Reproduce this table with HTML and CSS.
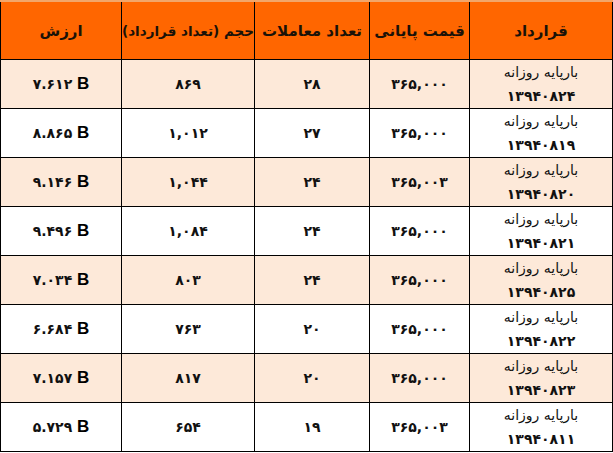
FILE: index.html
```html
<!DOCTYPE html>
<html lang="fa" dir="rtl">
<head>
<meta charset="utf-8">
<link rel="stylesheet" href="styles.css">
</head>
<body>
<table class="grid">
  <colgroup>
    <col class="c1"><col class="c2"><col class="c3"><col class="c4"><col class="c5">
  </colgroup>
  <thead>
    <tr class="head">
      <th>قرارداد</th>
      <th>قیمت پایانی</th>
      <th>تعداد معاملات</th>
      <th class="tight">حجم (تعداد قرارداد)</th>
      <th>ارزش</th>
    </tr>
  </thead>
  <tbody>
    <tr class="alt">
      <td class="name">بارپایه روزانه<br><span class="date">۱۳۹۴۰۸۲۴</span></td>
      <td class="num">۳۶۵,۰۰۰</td><td class="num">۲۸</td><td class="num">۸۶۹</td>
      <td class="num"><span class="val" dir="ltr">۷.۶۱۲ <b>B</b></span></td>
    </tr>
    <tr>
      <td class="name">بارپایه روزانه<br><span class="date">۱۳۹۴۰۸۱۹</span></td>
      <td class="num">۳۶۵,۰۰۰</td><td class="num">۲۷</td><td class="num">۱,۰۱۲</td>
      <td class="num"><span class="val" dir="ltr">۸.۸۶۵ <b>B</b></span></td>
    </tr>
    <tr class="alt">
      <td class="name">بارپایه روزانه<br><span class="date">۱۳۹۴۰۸۲۰</span></td>
      <td class="num">۳۶۵,۰۰۳</td><td class="num">۲۴</td><td class="num">۱,۰۴۴</td>
      <td class="num"><span class="val" dir="ltr">۹.۱۴۶ <b>B</b></span></td>
    </tr>
    <tr>
      <td class="name">بارپایه روزانه<br><span class="date">۱۳۹۴۰۸۲۱</span></td>
      <td class="num">۳۶۵,۰۰۰</td><td class="num">۲۴</td><td class="num">۱,۰۸۴</td>
      <td class="num"><span class="val" dir="ltr">۹.۴۹۶ <b>B</b></span></td>
    </tr>
    <tr class="alt">
      <td class="name">بارپایه روزانه<br><span class="date">۱۳۹۴۰۸۲۵</span></td>
      <td class="num">۳۶۵,۰۰۰</td><td class="num">۲۴</td><td class="num">۸۰۳</td>
      <td class="num"><span class="val" dir="ltr">۷.۰۳۴ <b>B</b></span></td>
    </tr>
    <tr>
      <td class="name">بارپایه روزانه<br><span class="date">۱۳۹۴۰۸۲۲</span></td>
      <td class="num">۳۶۵,۰۰۰</td><td class="num">۲۰</td><td class="num">۷۶۳</td>
      <td class="num"><span class="val" dir="ltr">۶.۶۸۴ <b>B</b></span></td>
    </tr>
    <tr class="alt">
      <td class="name">بارپایه روزانه<br><span class="date">۱۳۹۴۰۸۲۳</span></td>
      <td class="num">۳۶۵,۰۰۰</td><td class="num">۲۰</td><td class="num">۸۱۷</td>
      <td class="num"><span class="val" dir="ltr">۷.۱۵۷ <b>B</b></span></td>
    </tr>
    <tr>
      <td class="name">بارپایه روزانه<br><span class="date">۱۳۹۴۰۸۱۱</span></td>
      <td class="num">۳۶۵,۰۰۳</td><td class="num">۱۹</td><td class="num">۶۵۴</td>
      <td class="num"><span class="val" dir="ltr">۵.۷۲۹ <b>B</b></span></td>
    </tr>
  </tbody>
</table>
</body>
</html>
```
FILE: styles.css
```css
html, body {
  margin: 0;
  padding: 0;
  background: #ffffff;
}
body {
  font-family: "DejaVu Sans", "Noto Sans", sans-serif;
  color: #111111;
}
.grid {
  border-collapse: collapse;
  table-layout: fixed;
  width: 612px;
  margin-left: 1px;
  border-top: 2px solid #f2a66a;
}
.c1 { width: 143px; }
.c2 { width: 100px; }
.c3 { width: 115px; }
.c4 { width: 133px; }
.c5 { width: 121px; }
.grid th,
.grid td {
  border: 1px solid #000000;
  padding: 0;
  text-align: center;
  vertical-align: middle;
}
.head th {
  background: #ff6600;
  height: 57px;
  font-size: 15px;
  font-weight: bold;
  color: #1a1208;
  border-top: none;
  white-space: nowrap;
}
.head th.tight {
  font-size: 13.5px;
  letter-spacing: -0.3px;
}
.grid tbody tr {
  height: 49px;
}
.grid tbody td {
  height: 48px;
}
.alt td {
  background: #fde9d9;
}
.num {
  font-size: 14px;
  font-weight: bold;
}
.name {
  font-size: 14px;
  line-height: 24px;
  padding-left: 16px;
  white-space: nowrap;
}
.date {
  font-weight: bold;
  font-size: 14px;
}
.val b {
  font-family: "Liberation Sans", Arial, sans-serif;
  font-size: 17px;
  font-weight: bold;
  color: #000000;
}
```
